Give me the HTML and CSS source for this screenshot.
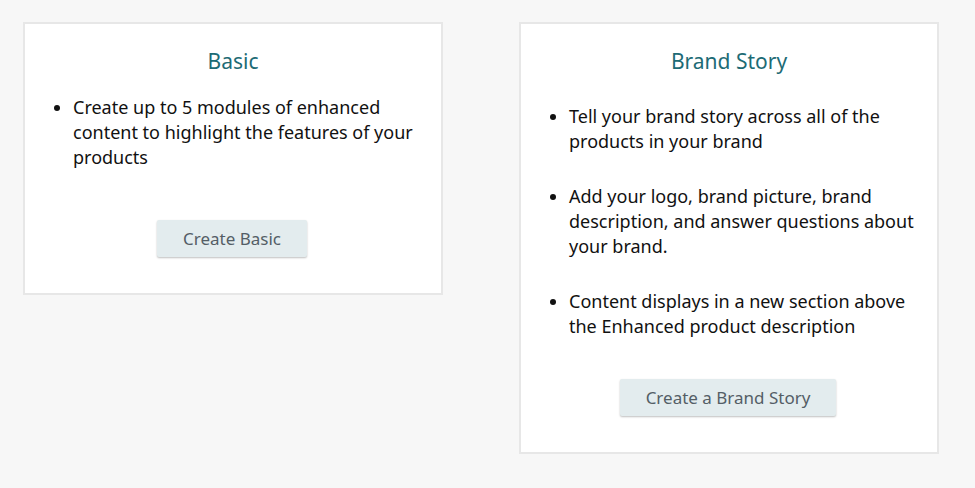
FILE: index.html
```html
<!DOCTYPE html>
<html>
<head>
<meta charset="utf-8">
<link rel="stylesheet" href="styles.css">
</head>
<body>
<div class="page">
  <section class="card card-basic">
    <h2 class="title">Basic</h2>
    <ul class="list">
      <li>Create up to 5 modules of enhanced content to highlight the features of your products</li>
    </ul>
    <div class="actions"><button class="btn">Create Basic</button></div>
  </section>
  <section class="card card-story">
    <h2 class="title">Brand Story</h2>
    <ul class="list">
      <li>Tell your brand story across all of the products in your brand</li>
      <li>Add your logo, brand picture, brand description, and answer questions about your brand.</li>
      <li>Content displays in a new section above the Enhanced product description</li>
    </ul>
    <div class="actions"><button class="btn">Create a Brand Story</button></div>
  </section>
</div>
</body>
</html>
```
FILE: styles.css
```css
html, body {
  margin: 0;
  padding: 0;
  background: #f7f7f7;
  font-family: "Noto Sans", "Open Sans", sans-serif;
  color: #111;
}
.page {
  display: flex;
  align-items: flex-start;
  gap: 76px;
  padding: 22px 0 0 23px;
}
.card {
  box-sizing: border-box;
  width: 420px;
  background: #fff;
  border: 2px solid #e7e7e7;
  padding: 23px 16px 36px 30px;
}
.title {
  margin: 0;
  padding-right: 14px;
  text-align: center;
  font-weight: 400;
  font-size: 21px;
  line-height: 28px;
  color: #1d6b75;
}
.list {
  margin: 0;
  padding: 0 0 0 18px;
  font-size: 18px;
  line-height: 25px;
}
.card-basic .list { margin-top: 20px; }
.card-story .list { margin-top: 29px; display: flex; flex-direction: column; gap: 30px; }
.actions {
  display: flex;
  justify-content: center;
  padding-right: 16px;
}
.card-basic .actions { margin-top: 50px; }
.card-story .actions { margin-top: 40px; }
.btn {
  font-family: inherit;
  font-size: 17px;
  color: #545e66;
  background: #e3ecee;
  border: none;
  border-radius: 2px;
  box-shadow: 0 1px 2px rgba(0,0,0,0.25);
  height: 37px;
  padding: 0 26px;
  cursor: pointer;
}
```
